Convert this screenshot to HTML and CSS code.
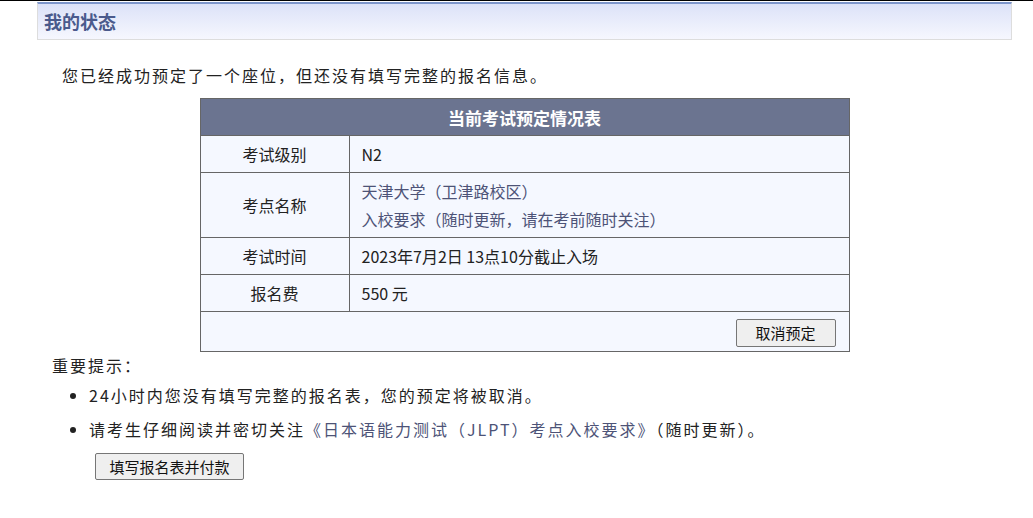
FILE: index.html
```html
<!DOCTYPE html>
<html lang="zh-CN">
<head>
<meta charset="UTF-8">
<title>我的状态</title>
<link rel="stylesheet" href="styles.css">
</head>
<body>

<div class="topline"></div>
<div class="page">
    <div class="panel-title">
        <h2>我的状态</h2>
    </div>

    <p class="notice">您已经成功预定了一个座位，但还没有填写完整的报名信息。</p>

    <table class="booking">
        <thead>
            <tr>
                <th colspan="2">当前考试预定情况表</th>
            </tr>
        </thead>
        <tbody>
            <tr class="row-std">
                <td class="label">考试级别</td>
                <td>N2</td>
            </tr>
            <tr class="row-tall">
                <td class="label">考点名称</td>
                <td>
                    <a href="#" class="link">天津大学（卫津路校区）</a><br>
                    <a href="#" class="link">入校要求（随时更新，请在考前随时关注）</a>
                </td>
            </tr>
            <tr class="row-std">
                <td class="label">考试时间</td>
                <td>2023年7月2日 13点10分截止入场</td>
            </tr>
            <tr class="row-std">
                <td class="label">报名费</td>
                <td>550 元</td>
            </tr>
            <tr class="row-action">
                <td colspan="2">
                    <button class="btn btn-cancel">取消预定</button>
                </td>
            </tr>
        </tbody>
    </table>

    <div class="tips">
        <p class="tips-title">重要提示：</p>
        <ul>
            <li>24小时内您没有填写完整的报名表，您的预定将被取消。</li>
            <li>请考生仔细阅读并密切关注<a href="#" class="link">《日本语能力测试（JLPT）考点入校要求》</a>（随时更新）。</li>
        </ul>
        <button class="btn btn-pay">填写报名表并付款</button>
    </div>
</div>

</body>
</html>
```

FILE: styles.css
```css
* {
    box-sizing: border-box;
}
body {
    margin: 0;
    font-family: "Noto Sans CJK SC", "Microsoft YaHei", sans-serif;
    color: #222;
    background-color: #fff;
}
.topline {
    height: 1px;
    background-color: #000;
}
.page {
    width: 975px;
    margin-left: 37px;
    padding-top: 1px;
}
.panel-title {
    height: 38px;
    padding-left: 6px;
    border: 1px solid #ddd;
    border-top: 2px solid #7d96cb;
    background: linear-gradient(#dce2f8, #f6f7fe);
}
.panel-title h2 {
    margin: 0;
    font-size: 18px;
    line-height: 34px;
    color: #4a5a8c;
}
.notice {
    margin: 23px 0 11px;
    padding-left: 25px;
    font-size: 16px;
    line-height: 24px;
    letter-spacing: 2px;
}
.link {
    color: #4d5377;
    text-decoration: none;
}

/* booking summary table */
.booking {
    width: 650px;
    margin: 0 auto;
    border-collapse: collapse;
    border: 1px solid #666;
    background-color: #f5f8ff;
    font-size: 16px;
}
.booking th {
    height: 37px;
    padding: 0;
    background-color: #6b7490;
    color: #fff;
    font-size: 17px;
    border: 1px solid #666;
}
.booking td {
    padding: 0 12px;
    border: 1px solid #666;
    line-height: 28px;
}
.booking td.label {
    width: 149px;
    text-align: center;
}
.row-std td {
    height: 37px;
}
.row-tall td {
    height: 65px;
}
.row-action td {
    height: 40px;
    padding-right: 13px;
    text-align: right;
}

.btn {
    font-family: inherit;
    font-size: 15px;
    color: #111;
    background-color: #efefef;
    border: 1px solid #767676;
    border-radius: 2px;
    padding: 0;
    cursor: pointer;
}
.btn-cancel {
    width: 100px;
    height: 28px;
    vertical-align: middle;
}

/* notes under the table */
.tips {
    padding-left: 15px;
    font-size: 16px;
    letter-spacing: 2px;
}
.tips-title {
    margin: 1px 0 0;
    line-height: 24px;
}
.tips ul {
    margin: 1px 0 0;
    padding-left: 37px;
}
.tips li {
    line-height: 34px;
}
.btn-pay {
    width: 149px;
    height: 27px;
    margin: 7px 0 0 43px;
    letter-spacing: 0;
}
```
